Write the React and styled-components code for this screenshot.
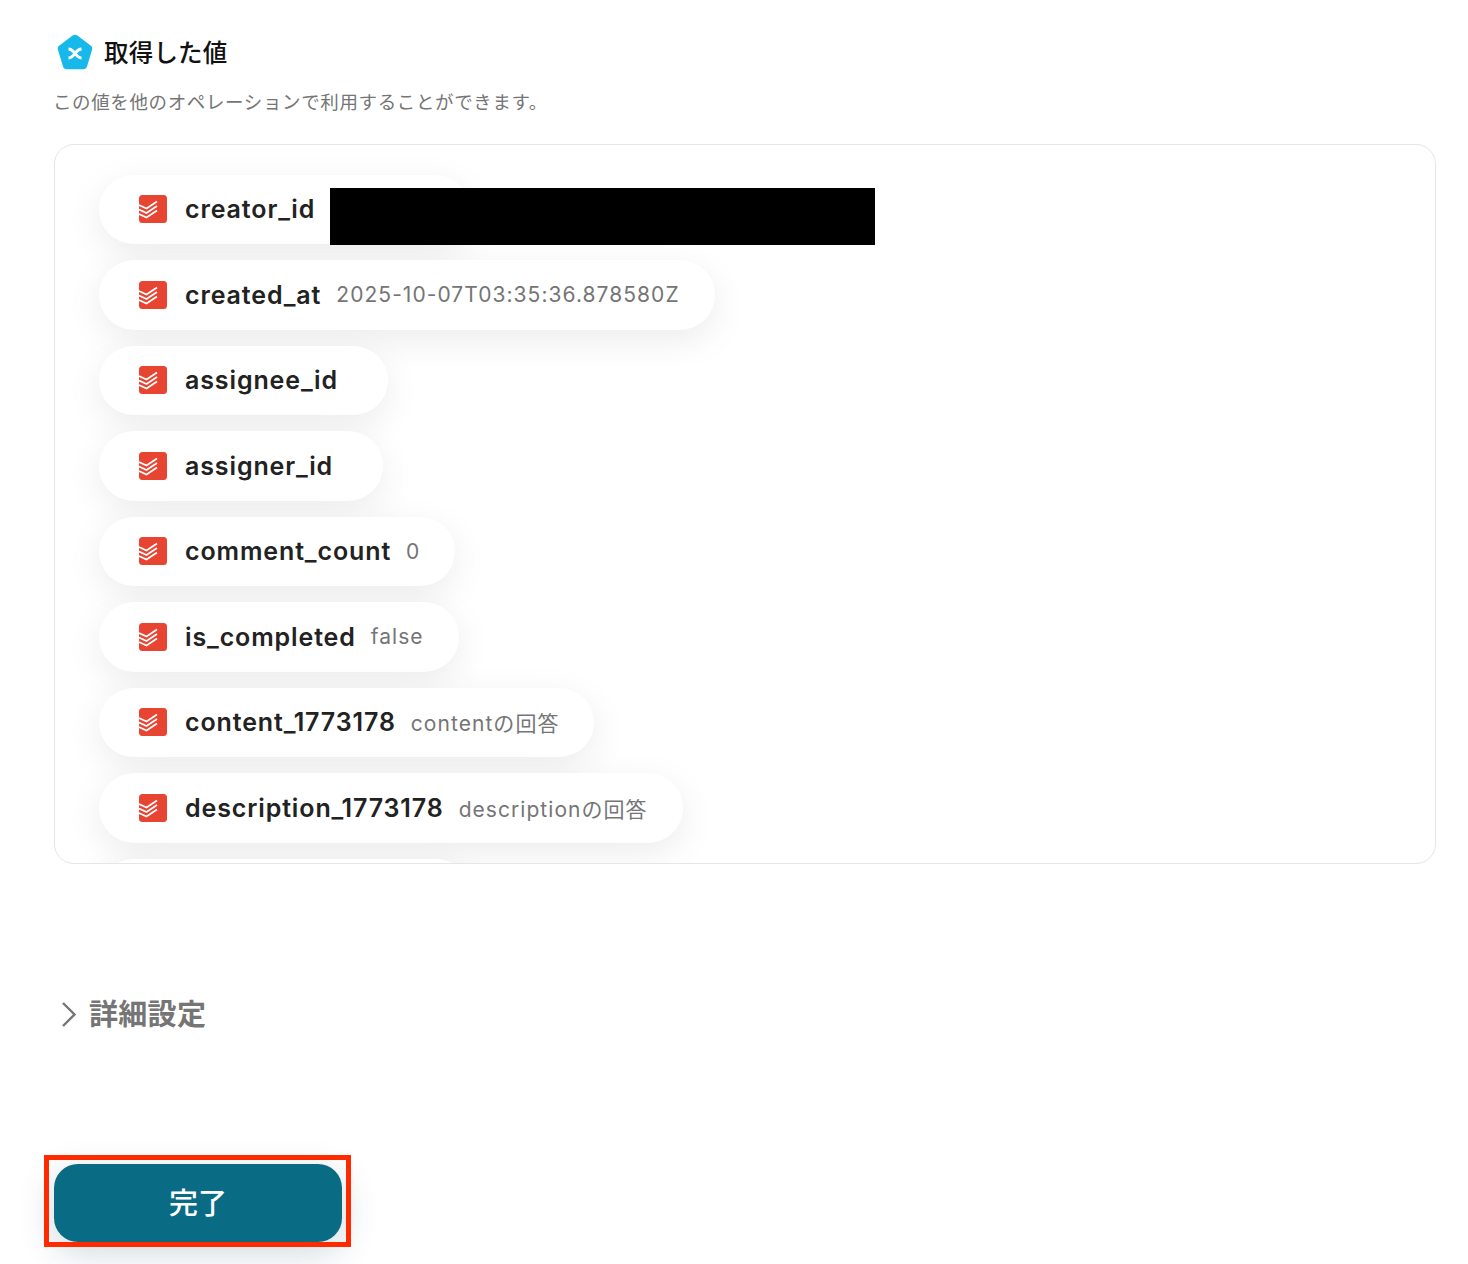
import styled, { createGlobalStyle } from 'styled-components'

const GlobalStyle = createGlobalStyle`
  html, body {
    margin: 0;
    padding: 0;
    background: #ffffff;
  }
  body {
    font-family: Inter, "Noto Sans CJK JP", sans-serif;
  }
`
const Page = styled.div`
  width: 1468px;
  height: 1264px;
  overflow: hidden;
  padding: 32px 32px 0 54px;
  box-sizing: border-box;
`
const TitleRow = styled.div`
  display: flex;
  align-items: center;
  gap: 11px;
  margin-left: 3px;
  height: 40px;
`
const Title = styled.h2`
  margin: 0;
  padding-bottom: 2px;
  font-size: 24.5px;
  font-weight: 500;
  color: #111111;
  letter-spacing: 0.2px;
`
const Caption = styled.p`
  margin: 16.5px 0 0 -1px;
  font-size: 18.5px;
  line-height: 26px;
  color: #757575;
  letter-spacing: 0.62px;
`
const Card = styled.div`
  position: relative;
  margin-top: 29.5px;
  width: 1382px;
  height: 720px;
  box-sizing: border-box;
  border: 1px solid #e6e6e6;
  border-radius: 20px;
  overflow: hidden;
  padding: 29.5px 44px 0;
  display: flex;
  flex-direction: column;
  align-items: flex-start;
  gap: 16px;
`
const Pill = styled.div`
  flex: none;
  display: flex;
  align-items: center;
  height: 69.5px;
  box-sizing: border-box;
  padding: 0 35px 0 40px;
  border-radius: 35px;
  background: #ffffff;
  box-shadow: 0 10px 36px rgba(0, 0, 0, 0.08);
`
const CutPill = styled(Pill)`
  width: 372px;
`
const PillName = styled.span`
  margin-left: 18px;
  font-size: 25px;
  font-weight: 600;
  color: #222222;
  letter-spacing: 0.88px;
  white-space: nowrap;
`
const PillValue = styled.span`
  margin-left: 15px;
  font-size: 21px;
  color: #757575;
  letter-spacing: 1.05px;
  white-space: nowrap;
`
const Redaction = styled.div`
  position: absolute;
  left: 275px;
  top: 43px;
  width: 545px;
  height: 57px;
  background: #000000;
`
const Details = styled.div`
  display: flex;
  align-items: center;
  gap: 11px;
  margin: 128px 0 0 6px;
  height: 40px;
`
const DetailsChevron = styled.svg`
  flex: none;
  margin-top: 4px;
`
const DetailsLabel = styled.span`
  font-size: 29px;
  font-weight: 700;
  color: #757575;
  letter-spacing: 0.3px;
`
const ButtonWrap = styled.div`
  position: relative;
  width: 288px;
  height: 78px;
  margin-top: 132px;
`
const DoneButton = styled.button`
  display: block;
  width: 100%;
  height: 100%;
  padding: 0 0 4px;
  border: 0;
  border-radius: 24px;
  background: #0a6b84;
  color: #ffffff;
  font-family: inherit;
  font-size: 29px;
  font-weight: 500;
  box-shadow: 0 10px 36px rgba(10, 60, 80, 0.2);
`
const HighlightFrame = styled.div`
  position: absolute;
  inset: -9px -9px -5px -10px;
  border: 5px solid #ff2a00;
  pointer-events: none;
`

const fields = [
  { name: 'creator_id', value: '', width: 371 },
  { name: 'created_at', value: '2025-10-07T03:35:36.878580Z' },
  { name: 'assignee_id', value: '' },
  { name: 'assigner_id', value: '' },
  { name: 'comment_count', value: '0' },
  { name: 'is_completed', value: 'false' },
  { name: 'content_1773178', value: 'contentの回答' },
  { name: 'description_1773178', value: 'descriptionの回答' },
]

function YoomIcon() {
  return (
    <svg width="36" height="36" viewBox="0 0 36 36">
      <path
        d="M15.6 1.6a4 4 0 0 1 4.8 0l13.2 10a4 4 0 0 1 1.4 4.4l-5 16.4a4 4 0 0 1-3.8 2.8H9.8a4 4 0 0 1-3.8-2.8L1 16a4 4 0 0 1 1.4-4.4z"
        fill="#17b9ea"
      />
      <path
        d="M11.5 15 C15 15 16 17 18 19.5 C20 22 21 24 24.5 24 M24.5 15 C21 15 20 17 18 19.5 C16 22 15 24 11.5 24"
        fill="none"
        stroke="#ffffff"
        strokeWidth="2.8"
      />
    </svg>
  )
}

function TodoistIcon() {
  return (
    <svg width="28" height="28" viewBox="0 0 28 28" style={{ flex: 'none' }}>
      <rect width="28" height="28" rx="3.5" fill="#e84432" />
      <g fill="none" stroke="#ffffff" strokeWidth="1.8">
        <path d="M0 10 L7.5 13.5 L18 6.5" />
        <path d="M0 14.5 L7.5 18 L18 11" />
        <path d="M0 19 L7.5 22.5 L18 15.5" />
      </g>
    </svg>
  )
}

function Chevron() {
  return (
    <DetailsChevron width="18" height="28" viewBox="0 0 18 28">
      <path d="M3 3 L14.5 14.5 L3 26" fill="none" stroke="#757575" strokeWidth="2.4" />
    </DetailsChevron>
  )
}

export default function App() {
  return (
    <Page>
      <GlobalStyle />
      <TitleRow>
        <YoomIcon />
        <Title>取得した値</Title>
      </TitleRow>
      <Caption>この値を他のオペレーションで利用することができます。</Caption>
      <Card>
        {fields.map((field) => (
          <Pill key={field.name} style={field.width ? { width: field.width } : undefined}>
            <TodoistIcon />
            <PillName>{field.name}</PillName>
            <PillValue>{field.value}</PillValue>
          </Pill>
        ))}
        <CutPill />
        <Redaction />
      </Card>
      <Details>
        <Chevron />
        <DetailsLabel>詳細設定</DetailsLabel>
      </Details>
      <ButtonWrap>
        <DoneButton>完了</DoneButton>
        <HighlightFrame />
      </ButtonWrap>
    </Page>
  )
}
